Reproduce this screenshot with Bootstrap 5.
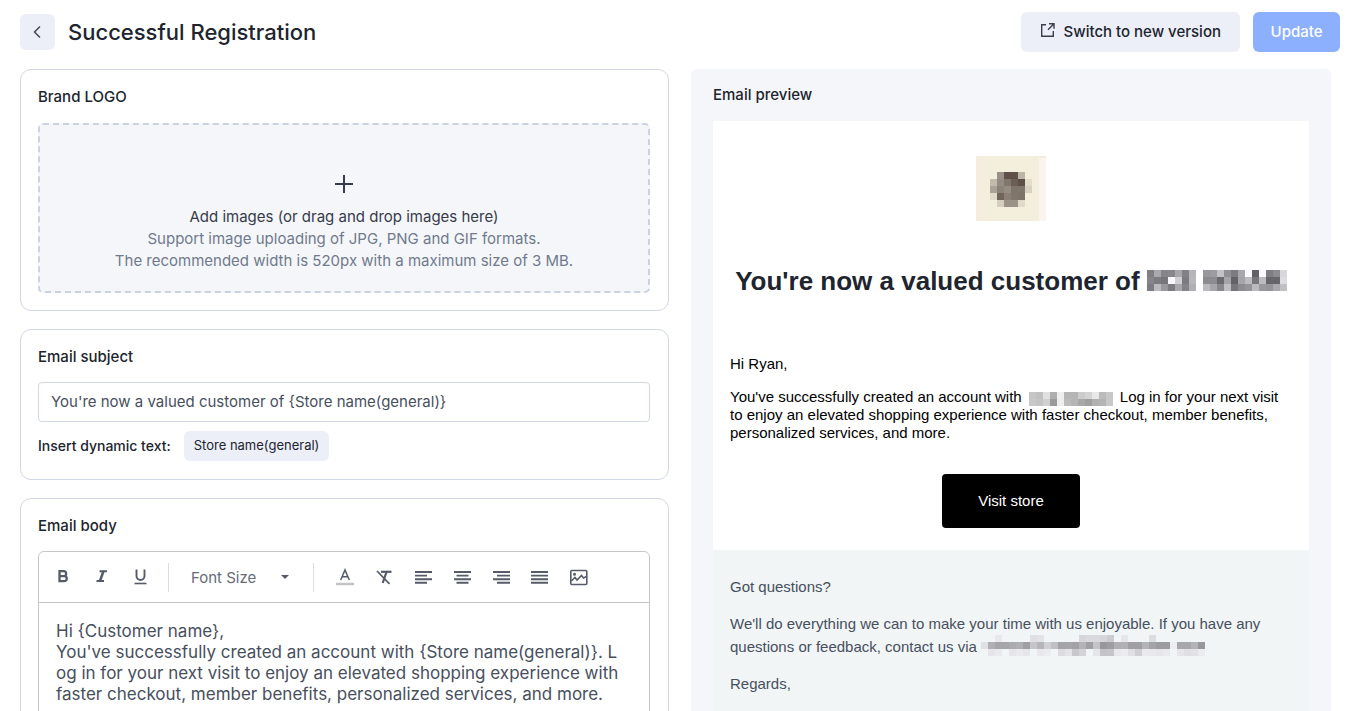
<!DOCTYPE html>
<html lang="en">
<head>
<meta charset="utf-8">
<meta name="viewport" content="width=device-width, initial-scale=1">
<title>Successful Registration</title>
<link rel="stylesheet" href="https://cdn.jsdelivr.net/npm/bootstrap@5.3.0/dist/css/bootstrap.min.css">
<style>
  body { font-family: Inter, "Liberation Sans", sans-serif; font-size: 15px; line-height: 20px; color: #20242e; background: #fff; }
  .topbar { padding: 12px 29px 12px 20px; }
  .page-title { font-size: 22px; line-height: 28px; font-weight: 500; margin: 0 0 0 13px; }
  .top-actions { gap: 13px; }
  .btn-soft { background: #eceff7; color: #20242e; border: 0; border-radius: 6px; }
  .btn-soft:hover { background: #e0e5f2; }
  .btn-back { width: 35px; height: 36px; }
  .btn-top { height: 40px; padding: 0 19px; font-weight: 500; font-size: 15px; }
  .btn-update, .btn-update:disabled { width: 87px; padding: 0; background: #8cb0fd; color: #fff; border: 0; border-radius: 6px; opacity: 1; }
  .workspace { display: grid; grid-template-columns: 649fr 640fr; column-gap: 22px; padding: 5px 38px 0 20px; min-height: 0; }
  .pane { min-height: 0; overflow: hidden; }
  .panel { border: 1px solid #d2d7e6; border-radius: 11px; padding: 17px 18px 17px 17px; margin-bottom: 18px; }
  .panel-title { font-size: 15px; line-height: 20px; font-weight: 500; margin-bottom: 15px; display: block; }
  .dropzone { height: 170px; margin-top: 16px; border: 2px dashed #cdd2e0; border-radius: 5px; background: #f5f6fa; padding-top: 47px; line-height: 22px; color: #6f7a8c; cursor: pointer; }
  .dropzone svg { display: block; margin: 0 auto 10px; }
  .dropzone strong { font-weight: 400; color: #353b49; }
  .subject { height: 40px; border: 1px solid #d2d7e6; border-radius: 4px; padding: 0 12px 2px; font-size: 15px; color: #474f5e; }
  .dyn-row { margin: 9px 0 1px; gap: 13px; }
  .dyn-label { font-size: 14px; font-weight: 500; }
  .btn-tag { height: 30px; padding: 0 10px; font-size: 13px; }
  .editor { border: 1px solid #c5c6c9; border-radius: 6px; }
  .tools { height: 51px; padding: 0 4px; border-bottom: 1px solid #c5c6c9; }
  .tool { width: 39px; height: 32px; padding: 0; border: 0; background: none; color: #565b69; }
  .tool svg { display: block; margin: auto; }
  .sep { width: 1px; height: 29px; background: #dcdde0; }
  .sep-after { margin-right: 11px; }
  .size-select { width: 144px; border: 0; padding: 2px 22px 0; font-size: 15px; color: #666b78; appearance: none;
    background: url("data:image/svg+xml,%3Csvg xmlns='http://www.w3.org/2000/svg' viewBox='0 0 8 4'%3E%3Cpath d='M0 0h8L4 4z' fill='%23565b69'/%3E%3C/svg%3E") no-repeat right 24px center / 8px 4px; }
  .body-text { padding: 18px 29px 18px 17px; font-size: 17px; line-height: 21px; color: #474f5e; word-break: break-all; min-height: 200px; outline: 0; }
  .preview { background: #f5f6fa; border-radius: 6px 6px 0 0; padding: 16px 22px 0; }
  .preview .panel-title { margin-bottom: 16px; }
  .mail { background: #fff; font-family: "Liberation Sans", Arial, sans-serif; color: #000; font-size: 15px; line-height: 18px; }
  .mail-main { padding: 35px 17px 22px; }
  .mail-logo { display: block; margin: 0 auto 42px; }
  .mail-heading { font-size: 26px; line-height: 36px; font-weight: 700; color: #20242e; margin-bottom: 56px; text-align: center; white-space: nowrap; }
  .mail-main p { margin-bottom: 15px; }
  .redacted { vertical-align: -4px; margin-top: -8px; }
  .mail-heading .redacted { vertical-align: -1px; }
  .store-name { margin-left: 7px; margin-right: 3px; }
  .visit { width: 138px; height: 54px; margin-top: 17px; background: #000; color: #fff; border-radius: 4px; font-size: 15px; }
  .visit:hover { background: #222; color: #fff; }
  .mail-foot { background: #f1f5f6; color: #474f5e; padding: 25px 17px; line-height: 23px; min-height: 300px; }
  .mail-foot p { margin-bottom: 14px; }
</style>
</head>
<body>
<div class="vh-100 d-flex flex-column overflow-hidden">
  <header class="topbar d-flex align-items-center">
    <button type="button" class="btn btn-soft btn-back p-0 d-flex align-items-center justify-content-center" aria-label="Back">
      <svg width="12" height="14" viewBox="0 0 12 14" fill="none" stroke="#424754" stroke-width="1.500"><path d="M8 1.500 2.500 7 8 12.500"/></svg>
    </button>
    <h1 class="page-title">Successful Registration</h1>
    <div class="top-actions ms-auto d-flex">
      <button type="button" class="btn btn-soft btn-top d-flex align-items-center">
        <svg class="me-2 mb-1" width="16" height="16" viewBox="0 0 16 16" fill="none" stroke="#3b404d" stroke-width="1.400"><path d="M6 2.700H1.700v11.600h11.600V9M9 1.700h5v5M13.800 1.900 8 7.700"/></svg>
        Switch to new version
      </button>
      <button type="button" class="btn btn-top btn-update" disabled>Update</button>
    </div>
  </header>

  <main class="workspace flex-grow-1">
    <div class="pane">
      <section class="panel">
        <h2 class="panel-title">Brand LOGO</h2>
        <div class="dropzone text-center" tabindex="0">
          <svg width="24" height="24" viewBox="0 0 24 24" stroke="#353b49" stroke-width="2"><path d="M12 3v18M3 12h18"/></svg>
          <strong class="d-block">Add images (or drag and drop images here)</strong>
          <div>Support image uploading of JPG, PNG and GIF formats.</div>
          <div>The recommended width is 520px with a maximum size of 3 MB.</div>
        </div>
      </section>

      <section class="panel">
        <label class="panel-title" for="subject">Email subject</label>
        <input id="subject" type="text" class="form-control subject" value="You're now a valued customer of {Store name(general)}">
        <div class="dyn-row d-flex align-items-center">
          <span class="dyn-label">Insert dynamic text:</span>
          <button type="button" class="btn btn-soft btn-tag">Store name(general)</button>
        </div>
      </section>

      <section class="panel">
        <h2 class="panel-title" id="bodyLabel">Email body</h2>
        <div class="editor">
          <div class="tools d-flex align-items-center" role="toolbar" aria-label="Formatting">
            <button type="button" class="tool" aria-label="Bold"><svg width="18" height="18" viewBox="0 0 18 18" fill="none" stroke="currentColor" stroke-width="2.300"><path d="M5.500 3.200h4.200a2.300 2.300 0 0 1 0 4.900H5.500zM5.500 8.100h4.700a2.500 2.500 0 0 1 0 5.100H5.500z"/></svg></button>
            <button type="button" class="tool" aria-label="Italic"><svg width="18" height="18" viewBox="0 0 18 18" fill="none" stroke="currentColor" stroke-width="2"><path d="M6.500 3.200H14M3.500 13H11"/><path d="M10.500 3 7 13" stroke-width="2.500"/></svg></button>
            <button type="button" class="tool" aria-label="Underline"><svg width="18" height="18" viewBox="0 0 18 18" fill="none" stroke="currentColor" stroke-width="1.900"><path d="M4.500 1.500V8a4 4 0 0 0 8 0V1.500"/><path d="M2.500 15.500h12" stroke-width="1.600"/></svg></button>
            <span class="sep ms-2"></span>
            <select class="size-select" aria-label="Font size"><option>Font Size</option><option>Small</option><option>Large</option></select>
            <span class="sep sep-after"></span>
            <button type="button" class="tool" aria-label="Text colour"><svg width="18" height="18" viewBox="0 0 18 18" fill="none" stroke="currentColor" stroke-width="1.500"><path d="M4.700 12 9 2l4.300 10M6.200 8.800h5.600"/><path d="M0 16h18" stroke="#c2c3c6" stroke-width="2.500"/></svg></button>
            <button type="button" class="tool" aria-label="Clear formatting"><svg width="18" height="18" viewBox="0 0 18 18" fill="none" stroke="currentColor"><path d="M6 3.800h10.500" stroke-width="2.200"/><path d="M11.500 4 7.700 15" stroke-width="2.200"/><path d="M2 3l12.500 12.800" stroke-width="1.700"/></svg></button>
            <button type="button" class="tool" aria-label="Align left"><svg width="18" height="18" viewBox="0 0 18 18" stroke="currentColor" stroke-width="1.900"><path d="M1 4h17M1 7.600h12M1 11.200h17M1 14.800h12"/></svg></button>
            <button type="button" class="tool" aria-label="Align center"><svg width="18" height="18" viewBox="0 0 18 18" stroke="currentColor" stroke-width="1.900"><path d="M1 4h17M3.500 7.600h12M1 11.200h17M3.500 14.800h12"/></svg></button>
            <button type="button" class="tool" aria-label="Align right"><svg width="18" height="18" viewBox="0 0 18 18" stroke="currentColor" stroke-width="1.900"><path d="M1 4h17M5 7.600h13M1 11.200h17M5 14.800h13"/></svg></button>
            <button type="button" class="tool" aria-label="Justify"><svg width="18" height="18" viewBox="0 0 18 18" stroke="currentColor" stroke-width="1.900"><path d="M0 4h17M0 7.600h17M0 11.200h17M0 14.800h17"/></svg></button>
            <button type="button" class="tool" aria-label="Insert image"><svg width="18" height="18" viewBox="0 0 18 18" fill="none" stroke="currentColor" stroke-width="1.600"><rect x=".800" y="2.500" width="16" height="14" rx="1"/><path d="M1.300 13l3.700-3.500 2 2.500 4.500-4.500 2 2.500 3-1.500"/><circle cx="4.500" cy="6.300" r=".700" fill="currentColor"/></svg></button>
          </div>
          <div class="body-text" contenteditable="true" role="textbox" aria-multiline="true" aria-labelledby="bodyLabel" spellcheck="false">Hi {Customer name},<br>You've successfully created an account with {Store name(general)}. Log in for your next visit to enjoy an elevated shopping experience with faster checkout, member benefits, personalized services, and more.</div>
        </div>
      </section>
    </div>

    <aside class="pane preview">
      <h2 class="panel-title">Email preview</h2>
      <div class="mail">
        <div class="mail-main">
          <svg class="mail-logo" width="70" height="65" viewBox="0 0 70 65" shape-rendering="crispEdges" role="img" aria-label="Store logo">
            <path fill="#f4eddf" d="M0 0h70v65H0z"/><path fill="#f4eedc" d="M7 0h56v65H7z"/><path fill="#f9f4ed" d="M63 2h7v63h-7z"/>
            <g class="logo-cells"></g>
          </svg>
          <h3 class="mail-heading">You're now a valued customer of <svg class="redacted" data-cells="name" height="21"></svg></h3>
          <p>Hi Ryan,</p>
          <p>You've successfully created an account with<svg class="redacted store-name" data-cells="store" height="14"></svg> Log in for your next visit to enjoy an elevated shopping experience with faster checkout, member benefits, personalized services, and more.</p>
          <div class="text-center"><a href="#" class="btn visit d-inline-flex align-items-center justify-content-center">Visit store</a></div>
        </div>
        <div class="mail-foot">
          <p>Got questions?</p>
          <p>We'll do everything we can to make your time with us enjoyable. If you have any questions or feedback, contact us via <svg class="redacted" data-cells="address" height="21"></svg></p>
          <p>Regards,</p>
        </div>
      </div>
    </aside>
  </main>
</div>
<script src="https://cdn.jsdelivr.net/npm/bootstrap@5.3.0/dist/js/bootstrap.bundle.min.js"></script>
<script>
  // Pixelated blocks over private text: one grey level (hex) per 7px cell, "--" is empty.
  const cells = {
    name: ["7f a9 85 88 a8 82 b5 -- 99 9d c2 91 7c a9 fa 62 fa 7e 8c d8",
           "85 7c 77 f8 d0 7c b8 -- 8c 8c 6b a5 63 a5 bc 77 bc 66 66 dd",
           "7d bb 99 7c a8 84 b0 -- bb a6 88 c0 77 8c 95 bb 99 95 aa c0"],
    store: ["c6 c0 e0 ae ee b5 b5 cc d4 e8 bb c8", "c8 c4 d0 9a ee bb b5 a8 a0 b0 b4 c8"],
    address: ["-- -- e8 -- -- -- -- e0 e3 -- -- -- -- -- d6 da da d6 cc -- e6 -- -- -- dd -- -- -- -- -- -- --",
              "e0 b0 a6 a6 ac b0 a0 c6 b6 d0 c0 a4 a6 a2 b4 a0 c4 98 9e b0 b2 a0 a0 b4 a4 9c 9c ee a8 a8 b4 98",
              "-- e6 ea -- e6 ea e6 -- e8 ec -- dc e4 c8 d4 -- e6 c4 c6 e8 ec e0 d0 ea e8 e6 ea -- e6 e0 e2 ec"]
  };
  const rect = (x, y, fill) => `<rect x="${x}" y="${y}" width="7" height="7" fill="${fill}"/>`;
  document.querySelectorAll(".redacted").forEach(svg => {
    const rows = cells[svg.dataset.cells].map(r => r.split(" "));
    svg.setAttribute("width", rows[0].length * 7);
    svg.setAttribute("shape-rendering", "crispEdges");
    svg.innerHTML = rows.map((r, j) => r.map((v, i) => v === "--" ? "" :
      rect(i * 7, j * 7, svg.dataset.cells === "store" ? `#${v}${v}${v}` : `rgb(${parseInt(v, 16)} ${parseInt(v, 16)} ${parseInt(v, 16) + 4})`)).join("")).join("");
  });
  const logo = ["-- 9a9189 5f5147 5f5147 bdb5a6 --", "c3baab 958c81 80766b 6b5e54 5d4f45 e2dccb",
    "aaa296 8c8276 968c80 7e7468 7f756a d8d0c1", "e1dac9 70655b 8a8075 80766b 7e7368 --", "-- d5cdbe 9b9186 9c9287 e2dac9 --"];
  document.querySelector(".logo-cells").innerHTML = logo.map((r, j) => r.split(" ").map((c, i) =>
    c === "--" ? "" : rect(14 + i * 7, 16 + j * 7, "#" + c)).join("")).join("");
</script>
</body>
</html>
